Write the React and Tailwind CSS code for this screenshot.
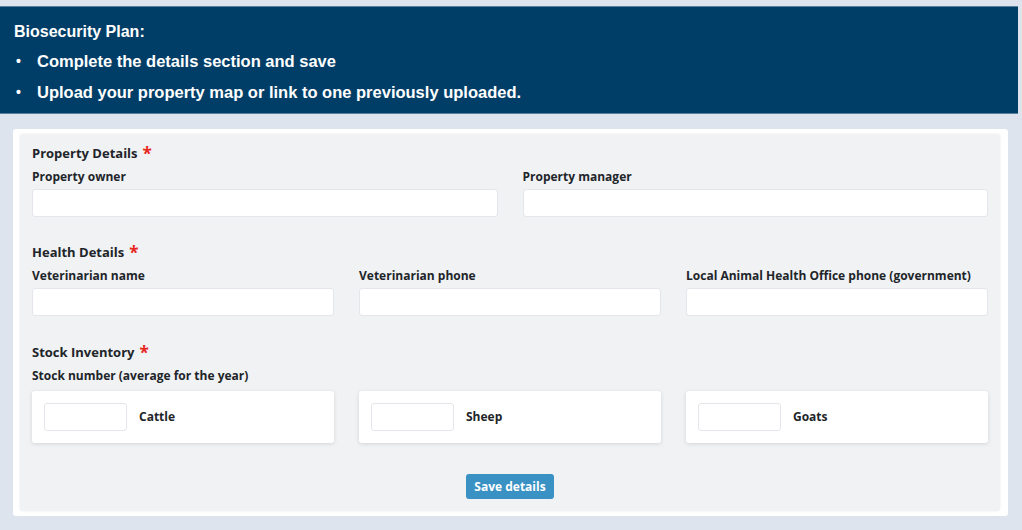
import React from "react";

function Field({ label }) {
  return (
    <div className="flex flex-col">
      <label className="mb-[4px] text-[12px] font-bold leading-4 text-[#212529]">{label}</label>
      <input
        type="text"
        className="h-[28px] w-full rounded-[3px] border border-[#e3e6ea] bg-white px-2 text-[12px] outline-none"
      />
    </div>
  );
}

function Heading({ children }) {
  return (
    <div className="mb-[6px] flex items-center text-[13px] font-bold leading-5 text-[#212529]">
      {children}
      <span className="ml-[5px] text-[17px] leading-none text-[#e8261c]">*</span>
    </div>
  );
}

function StockCard({ label }) {
  return (
    <div className="flex h-[52px] items-center gap-3 rounded-[3px] bg-white px-3 shadow-[0_1px_4px_rgba(0,0,0,0.12)]">
      <input
        type="text"
        className="h-[28px] w-[83px] rounded-[3px] border border-[#e3e6ea] bg-white px-2 text-[12px] outline-none"
      />
      <span className="text-[12px] font-bold text-[#212529]">{label}</span>
    </div>
  );
}

export default function App() {
  return (
    <div
      className="min-h-[530px] w-[1022px] bg-[#dde4ee]"
      style={{ fontFamily: '"Open Sans", "Noto Sans", sans-serif' }}
    >
      <div className="h-[6px]" />
      <div
        className="mr-[4px] border-y border-[#5b7f9c] bg-[#013e67] px-[14px] pb-[10px] pt-[14px] text-white"
        style={{ fontFamily: '"Liberation Sans", Arial, sans-serif' }}
      >
        <div className="text-[16px] font-bold leading-[22px]">Biosecurity Plan:</div>
        <ul className="mt-[7px] space-y-[9px]">
          <li className="flex items-center text-[16.5px] font-bold leading-[22px]">
            <span className="ml-[2px] w-[21px] text-[14px]">•</span>
            Complete the details section and save
          </li>
          <li className="flex items-center text-[16.5px] font-bold leading-[22px]">
            <span className="ml-[2px] w-[21px] text-[14px]">•</span>
            Upload your property map or link to one previously uploaded.
          </li>
        </ul>
      </div>

      <div className="pl-[13px] pr-[14px] pt-[15px]">
        <div className="rounded-[3px] bg-white pb-[5px] pl-[7px] pr-[8px] pt-[5px]">
          <div className="rounded-[3px] bg-[#f0f2f4] px-[12px] pb-[12px] pt-[9px] shadow-[0_0_3px_rgba(0,0,0,0.08)]">
            <Heading>Property Details</Heading>
            <div className="grid grid-cols-2 gap-[25px]">
              <Field label="Property owner" />
              <Field label="Property manager" />
            </div>

            <div className="mt-[25px]">
              <Heading>Health Details</Heading>
              <div className="grid grid-cols-3 gap-[25px]">
                <Field label="Veterinarian name" />
                <Field label="Veterinarian phone" />
                <Field label="Local Animal Health Office phone (government)" />
              </div>
            </div>

            <div className="mt-[26px]">
              <Heading>Stock Inventory</Heading>
              <div className="mb-[7px] text-[12px] font-bold leading-4 text-[#212529]">
                Stock number (average for the year)
              </div>
              <div className="grid grid-cols-3 gap-[25px]">
                <StockCard label="Cattle" />
                <StockCard label="Sheep" />
                <StockCard label="Goats" />
              </div>
            </div>

            <div className="mt-[31px] flex justify-center">
              <button
                type="button"
                className="h-[25px] rounded-[3px] bg-[#3a91c3] px-[8px] text-[12px] font-bold text-white"
              >
                Save details
              </button>
            </div>
          </div>
        </div>
      </div>
    </div>
  );
}
